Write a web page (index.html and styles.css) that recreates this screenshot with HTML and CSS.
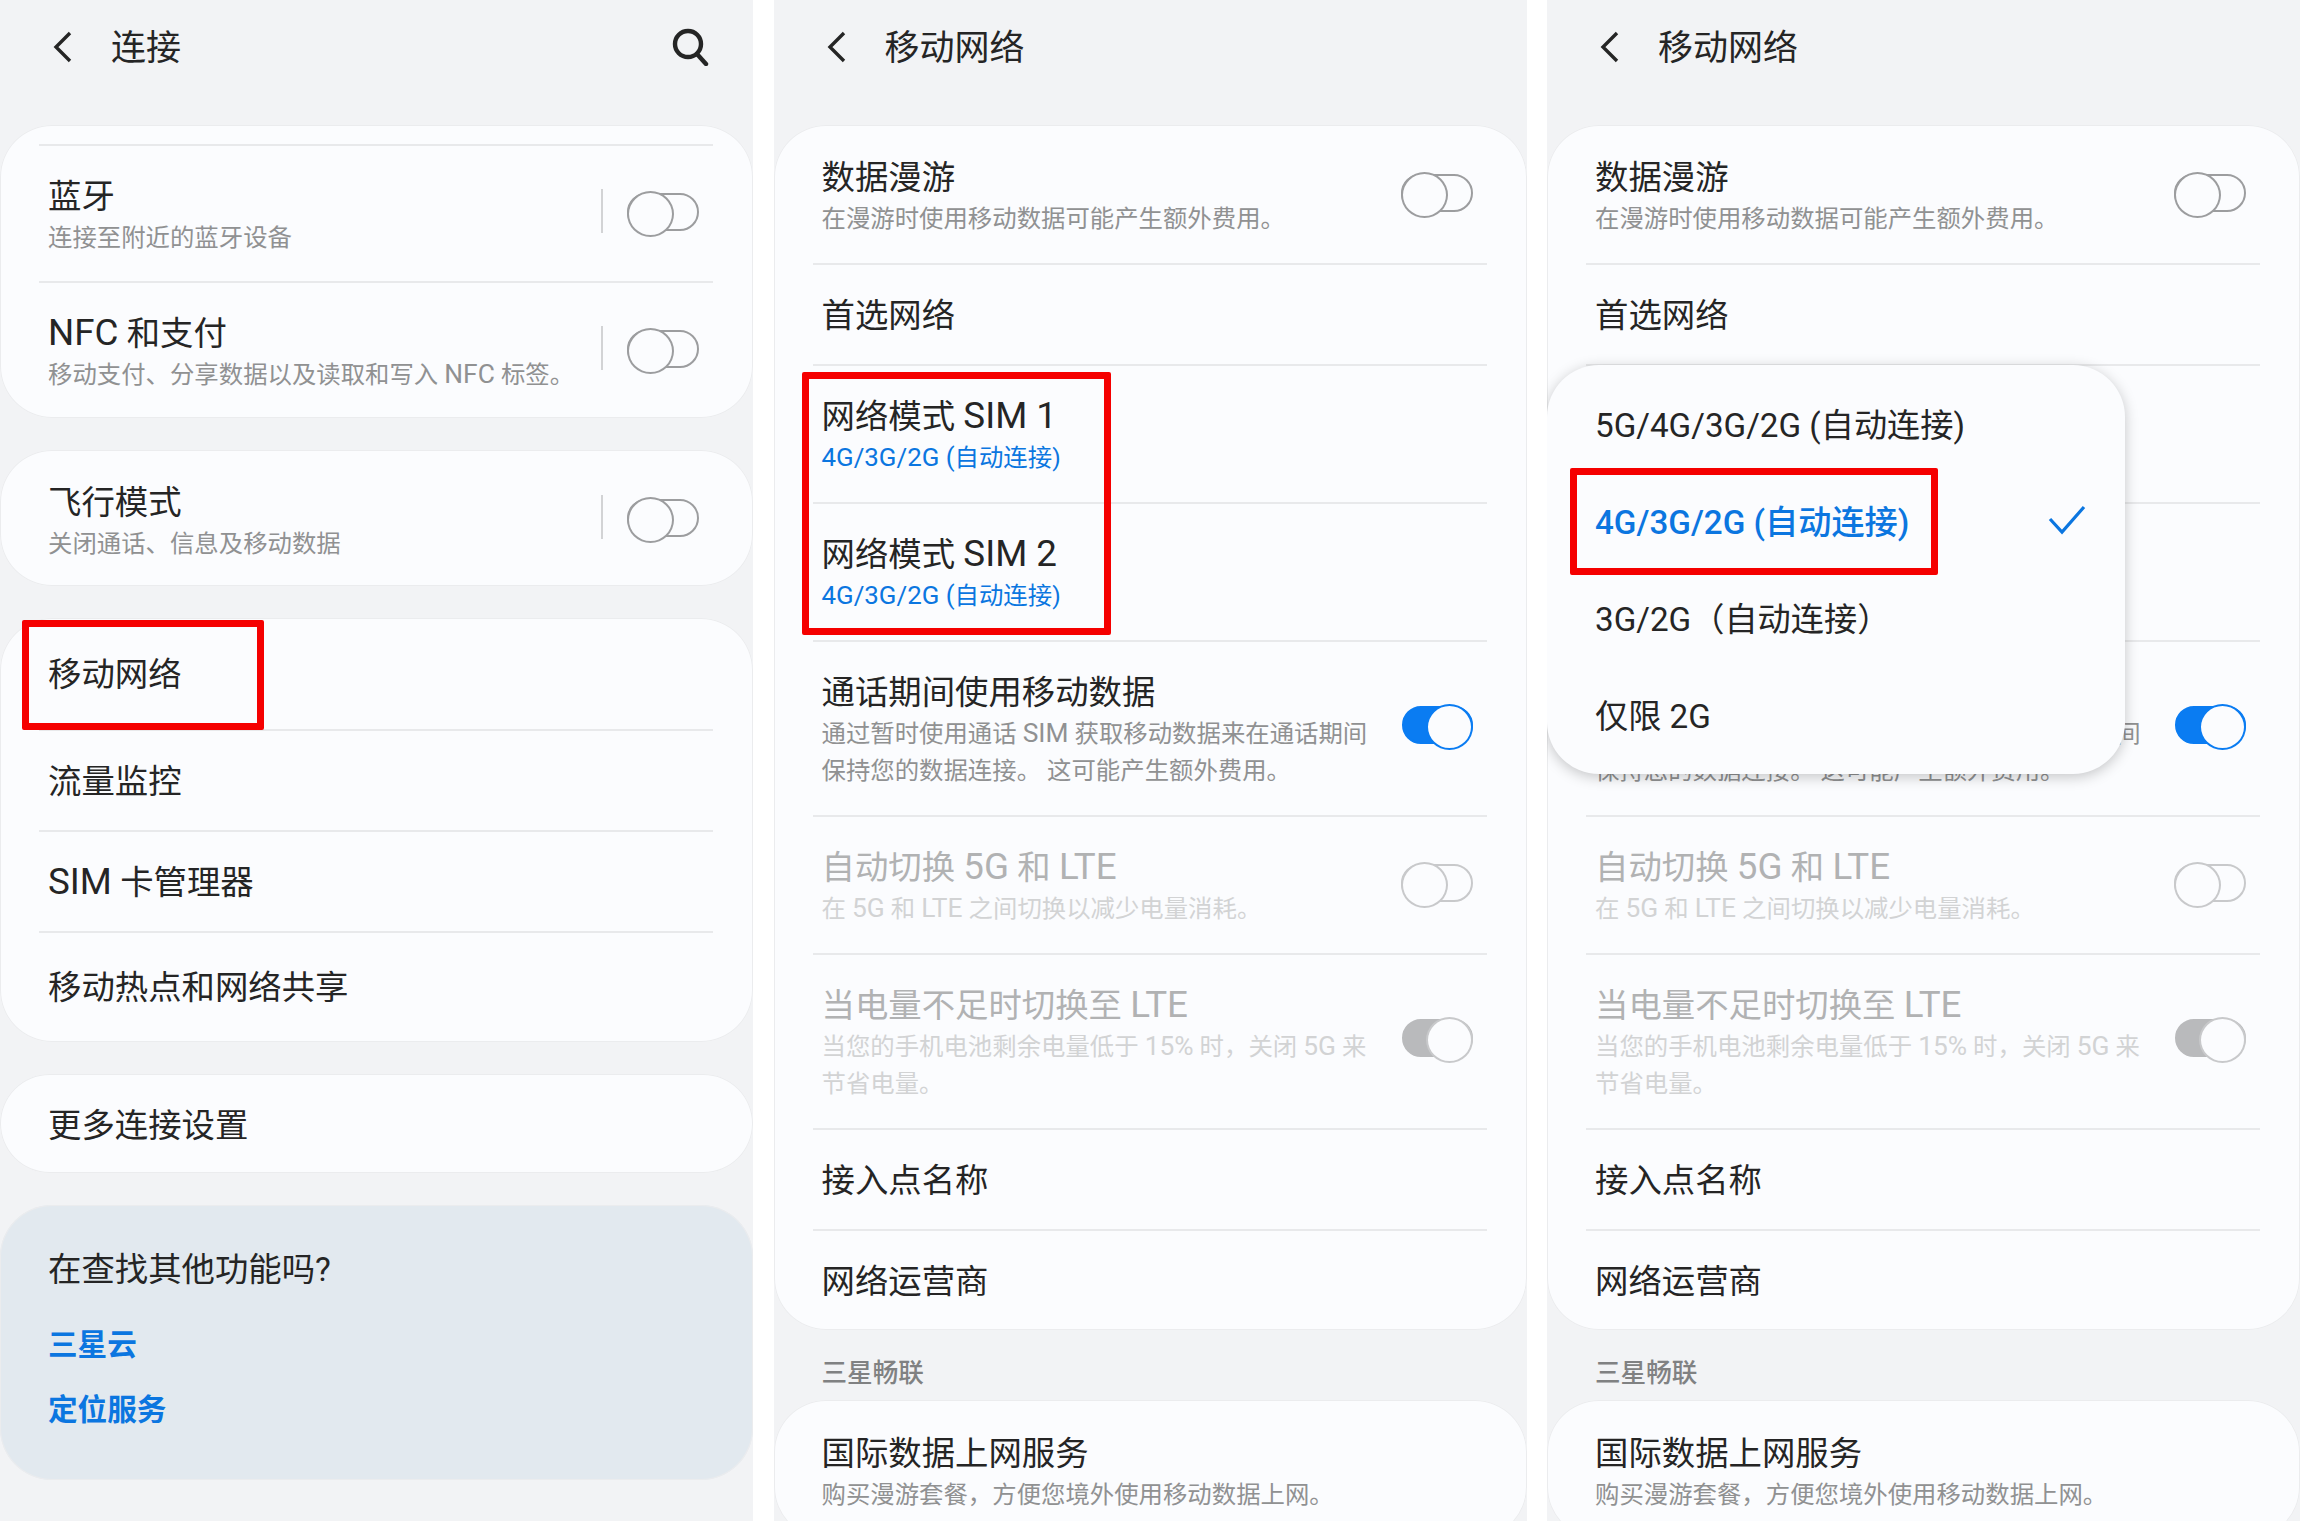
FILE: index.html
```html
<!DOCTYPE html>
<html lang="zh-CN">
<head>
<meta charset="utf-8">
<title>移动网络</title>
<link rel="stylesheet" href="styles.css">
</head>
<body>
<div class="screens">

<section class="panel">
  <header class="bar">
    <svg class="back" viewBox="0 0 24 34"><path d="M19 3 5 17l14 14"/></svg>
    <h1 class="bar-title">连接</h1>
    <svg class="search" viewBox="0 0 38 38"><circle cx="17" cy="16" r="13"/><path d="m26 26 9 10"/></svg>
  </header>
  <div class="stack">
    <div class="card card-lined">
      <div class="row row-137 lined"><div class="body"><div class="t">蓝牙</div><div class="s">连接至附近的蓝牙设备</div></div><i class="vbar"></i><span class="toggle"></span></div>
      <div class="row row-137 lined"><div class="body"><div class="t"><span class="la">NFC</span> 和支付</div><div class="s">移动支付、分享数据以及读取和写入 <span class="la">NFC</span> 标签。</div></div><i class="vbar"></i><span class="toggle"></span></div>
    </div>
    <div class="card">
      <div class="row row-136"><div class="body"><div class="t">飞行模式</div><div class="s">关闭通话、信息及移动数据</div></div><i class="vbar"></i><span class="toggle"></span></div>
    </div>
    <div class="card">
      <div class="row row-edge"><div class="t">移动网络</div></div>
      <div class="row lined"><div class="t">流量监控</div></div>
      <div class="row lined"><div class="t"><span class="la">SIM</span> 卡管理器</div></div>
      <div class="row row-edge lined"><div class="t">移动热点和网络共享</div></div>
    </div>
    <div class="card">
      <div class="row row-99"><div class="t">更多连接设置</div></div>
    </div>
    <div class="card card-tip">
      <div class="t">在查找其他功能吗?</div>
      <a class="link link-first">三星云</a>
      <a class="link">定位服务</a>
    </div>
  </div>
  <div class="mark mark-net"></div>
</section>

<section class="panel">
  <header class="bar">
    <svg class="back" viewBox="0 0 24 34"><path d="M19 3 5 17l14 14"/></svg>
    <h1 class="bar-title">移动网络</h1>
  </header>
  <div class="card">
    <div class="row"><div class="body"><div class="t">数据漫游</div><div class="s">在漫游时使用移动数据可能产生额外费用。</div></div><span class="toggle"></span></div>
    <div class="row lined"><div class="t">首选网络</div></div>
    <div class="row lined"><div class="body"><div class="t">网络模式 <span class="la">SIM 1</span></div><div class="s s-blue"><span class="la">4G/3G/2G (</span>自动连接)</div></div></div>
    <div class="row lined"><div class="body"><div class="t">网络模式 <span class="la">SIM 2</span></div><div class="s s-blue"><span class="la">4G/3G/2G (</span>自动连接)</div></div></div>
    <div class="row lined"><div class="body"><div class="t">通话期间使用移动数据</div><div class="s">通过暂时使用通话 <span class="la">SIM</span> 获取移动数据来在通话期间<br>保持您的数据连接。 这可能产生额外费用。</div></div><span class="toggle on"></span></div>
    <div class="row lined off"><div class="body"><div class="t">自动切换 <span class="la">5G</span> 和 <span class="la">LTE</span></div><div class="s">在 <span class="la">5G</span> 和 <span class="la">LTE</span> 之间切换以减少电量消耗。</div></div><span class="toggle"></span></div>
    <div class="row lined off"><div class="body"><div class="t">当电量不足时切换至 <span class="la">LTE</span></div><div class="s">当您的手机电池剩余电量低于 <span class="la">15%</span> 时，关闭 <span class="la">5G</span> 来<br>节省电量。</div></div><span class="toggle on"></span></div>
    <div class="row lined"><div class="t">接入点名称</div></div>
    <div class="row lined"><div class="t">网络运营商</div></div>
  </div>
  <h2 class="section">三星畅联</h2>
  <div class="card">
    <div class="row row-last"><div class="body"><div class="t">国际数据上网服务</div><div class="s">购买漫游套餐，方便您境外使用移动数据上网。</div></div></div>
  </div>
  <div class="mark mark-sim"></div>
</section>

<section class="panel">
  <header class="bar">
    <svg class="back" viewBox="0 0 24 34"><path d="M19 3 5 17l14 14"/></svg>
    <h1 class="bar-title">移动网络</h1>
  </header>
  <div class="card">
    <div class="row"><div class="body"><div class="t">数据漫游</div><div class="s">在漫游时使用移动数据可能产生额外费用。</div></div><span class="toggle"></span></div>
    <div class="row lined"><div class="t">首选网络</div></div>
    <div class="row lined"><div class="body"><div class="t">网络模式 <span class="la">SIM 1</span></div><div class="s s-blue"><span class="la">4G/3G/2G (</span>自动连接)</div></div></div>
    <div class="row lined"><div class="body"><div class="t">网络模式 <span class="la">SIM 2</span></div><div class="s s-blue"><span class="la">4G/3G/2G (</span>自动连接)</div></div></div>
    <div class="row lined"><div class="body"><div class="t">通话期间使用移动数据</div><div class="s">通过暂时使用通话 <span class="la">SIM</span> 获取移动数据来在通话期间<br>保持您的数据连接。 这可能产生额外费用。</div></div><span class="toggle on"></span></div>
    <div class="row lined off"><div class="body"><div class="t">自动切换 <span class="la">5G</span> 和 <span class="la">LTE</span></div><div class="s">在 <span class="la">5G</span> 和 <span class="la">LTE</span> 之间切换以减少电量消耗。</div></div><span class="toggle"></span></div>
    <div class="row lined off"><div class="body"><div class="t">当电量不足时切换至 <span class="la">LTE</span></div><div class="s">当您的手机电池剩余电量低于 <span class="la">15%</span> 时，关闭 <span class="la">5G</span> 来<br>节省电量。</div></div><span class="toggle on"></span></div>
    <div class="row lined"><div class="t">接入点名称</div></div>
    <div class="row lined"><div class="t">网络运营商</div></div>
  </div>
  <h2 class="section">三星畅联</h2>
  <div class="card">
    <div class="row row-last"><div class="body"><div class="t">国际数据上网服务</div><div class="s">购买漫游套餐，方便您境外使用移动数据上网。</div></div></div>
  </div>
  <div class="menu">
    <div class="menu-item">5G/4G/3G/2G (自动连接)</div>
    <div class="menu-item selected">4G/3G/2G (自动连接)<svg class="check" viewBox="0 0 38 30"><path d="m2 14 12 13L36 2"/></svg></div>
    <div class="menu-item">3G/2G（自动连接）</div>
    <div class="menu-item">仅限 2G</div>
  </div>
  <div class="mark mark-opt"></div>
</section>

</div>
</body>
</html>
```
FILE: styles.css
```css
* { box-sizing: border-box; }
html, body { margin: 0; padding: 0; background: #fff; }
body {
  width: 2300px;
  height: 1521px;
  overflow: hidden;
  font-family: Roboto, "Noto Sans CJK SC", sans-serif;
  color: #252525;
}
.screens {
  display: grid;
  grid-template-columns: 753px 753px 753px;
  column-gap: 20.5px;
  height: 1521px;
}
.panel {
  position: relative;
  overflow: hidden;
  background: #f2f3f5;
  height: 1521px;
}
.bar {
  display: flex;
  align-items: center;
  height: 94px;
  margin-bottom: 31px;
  padding: 3px 44px 0 51px;
}
.back {
  width: 24px;
  height: 34px;
  margin-top: -3px;
  fill: none;
  stroke: #252525;
  stroke-width: 3.4;
  flex: none;
}
.bar-title {
  margin: 0 0 0 36px;
  font-size: 35px;
  line-height: 44px;
  font-weight: 400;
  flex: 1;
}
.search {
  width: 38px;
  height: 38px;
  margin-top: -3px;
  fill: none;
  stroke: #252525;
  stroke-width: 4.4;
  stroke-linecap: round;
}
.stack {
  display: flex;
  flex-direction: column;
  gap: 32px;
}
.card {
  background: #fbfcfe;
  border-radius: 52px;
  box-shadow: 0 0 0 1px #ebecee inset;
}
.card-lined { padding-top: 19px; }
.card-tip {
  background: #e2e9ef;
  height: 275px;
  padding: 45px 48px 0;
}
.row {
  display: flex;
  align-items: center;
  margin: 0 40px 0 39px;
  padding: 33px 14px 28px 9px;
  min-height: 101px;
}
.row .body { flex: 1; min-width: 0; }
.lined { border-top: 2px solid #e8e9eb; padding-top: 31px; }
.row-137 { padding-bottom: 27px; }
.row-136 { padding-bottom: 26px; }
.row-edge { padding-top: 37px; padding-bottom: 34px; }
.row-edge.lined { padding-top: 35px; }
.row-99 { min-height: 99px; padding-top: 32px; padding-bottom: 27px; }
.row-last { padding-top: 34px; }
.t {
  font-size: 33.4px;
  line-height: 40px;
}
.la { font-size: 1.1em; line-height: 0; }
.s {
  margin-top: 2px;
  margin-bottom: -2px;
  font-size: 24.4px;
  line-height: 37px;
  color: #909192;
}
.s .la { font-size: 1.08em; }
.s-blue .la { font-size: 1.06em; }
.s-blue { color: #0b76e0; }
.off .t { color: #b1b2b3; }
.off .s { color: #d2d3d4; }
.link {
  display: block;
  margin-top: 25px;
  font-size: 29.6px;
  line-height: 40px;
  font-weight: 700;
  color: #0b76e0;
}
.link-first { margin-top: 35px; }
.section {
  margin: 0;
  height: 70px;
  padding: 26px 0 0 48px;
  font-size: 25.6px;
  line-height: 34px;
  font-weight: 500;
  color: #808182;
}
.vbar {
  width: 2px;
  height: 44px;
  margin: 0 24px 9px 0;
  background: #d2d3d5;
  flex: none;
}
.toggle {
  position: relative;
  width: 72px;
  height: 38px;
  margin-bottom: 8px;
  flex: none;
  border: 2px solid #9c9d9f;
  border-radius: 19px;
}
.toggle::after {
  content: "";
  position: absolute;
  left: -2px;
  top: -4px;
  width: 43px;
  height: 42px;
  border: 2px solid #9c9d9f;
  border-radius: 50%;
  background: #fbfcfe;
}
.toggle.on { width: 71px; margin-bottom: 11px; background: #0a7cf2; border-color: #0a7cf2; }
.toggle.on::after { left: auto; right: -2px; border-color: #0a7cf2; }
.off .toggle { border-color: #c8c9cb; }
.off .toggle::after { border-color: #c8c9cb; }
.off .toggle.on { background: #b9babc; border-color: #b9babc; }
.menu {
  position: absolute;
  left: 0;
  top: 365px;
  width: 578px;
  height: 409px;
  padding: 9px 0 12px;
  background: #fbfcfe;
  border-radius: 52px;
  box-shadow: 0 3px 14px rgba(0, 0, 0, .22);
}
.menu-item {
  display: flex;
  align-items: center;
  justify-content: space-between;
  height: 97px;
  padding: 0 39px 0 48px;
  font-size: 33.2px;
}
.selected { color: #0b76e0; font-weight: 500; }
.check {
  width: 38px;
  height: 30px;
  fill: none;
  stroke: #0b76e0;
  stroke-width: 3.2;
}
.mark {
  position: absolute;
  border: 7px solid #f50000;
  border-radius: 2px;
}
.mark-net { left: 22px; top: 620px; width: 242px; height: 110px; }
.mark-sim { left: 28px; top: 372px; width: 309px; height: 263px; }
.mark-opt { left: 23px; top: 468px; width: 368px; height: 107px; }
```
